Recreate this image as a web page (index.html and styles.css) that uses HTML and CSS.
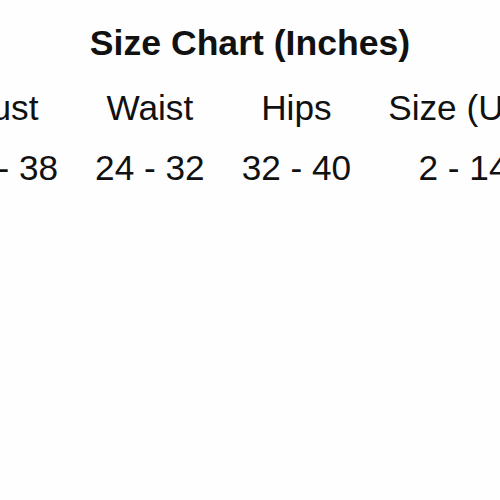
FILE: index.html
```html
<!DOCTYPE html>
<html>
<head>
<meta charset="utf-8">
<link rel="stylesheet" href="styles.css">
</head>
<body>
<div class="page">
  <h1 class="title">Size Chart (Inches)</h1>
  <table class="chart">
    <tr>
      <th>Bust</th>
      <th>Waist</th>
      <th>Hips</th>
      <th>Size (US)</th>
    </tr>
    <tr>
      <td>32 - 38</td>
      <td>24 - 32</td>
      <td>32 - 40</td>
      <td>2 - 14</td>
    </tr>
  </table>
</div>
</body>
</html>
```
FILE: styles.css
```css
html, body {
  margin: 0;
  padding: 0;
  background: #fefefe;
}
.page {
  width: 500px;
  height: 500px;
  overflow: hidden;
  font-family: "Liberation Sans", Arial, sans-serif;
  color: #111;
  padding-top: 23px;
  box-sizing: border-box;
}
.title {
  margin: 0 0 15px 0;
  font-size: 35.6px;
  line-height: 40px;
  font-weight: bold;
  text-align: center;
}
.chart {
  border-collapse: collapse;
  margin-left: -70px;
  font-size: 35.2px;
  line-height: 60px;
}
.chart th,
.chart td {
  padding: 0 18.5px;
  font-weight: normal;
  text-align: center;
  white-space: nowrap;
}
```
